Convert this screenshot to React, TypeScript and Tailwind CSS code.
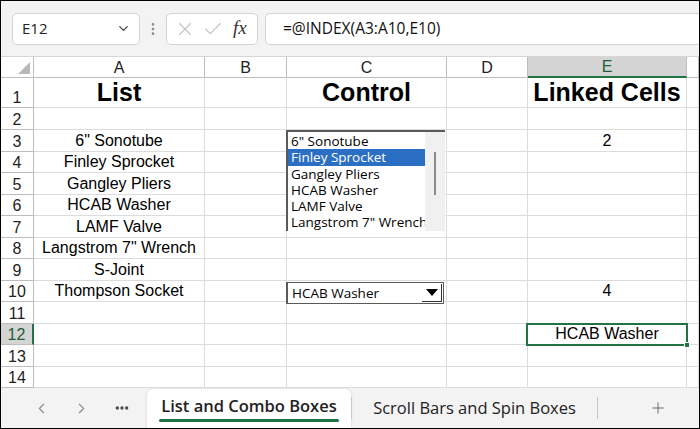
import { Check, ChevronDown, ChevronLeft, ChevronRight, EllipsisVertical, MoreHorizontal, Plus, X } from 'lucide-react'

type Row = { n: number; h: string; a?: string; c?: string; e?: string; bold?: boolean }

const rows: Row[] = [
  { n: 1, h: 'h-[30px]', a: 'List', c: 'Control', e: 'Linked Cells', bold: true },
  { n: 2, h: 'h-[22px]' },
  { n: 3, h: 'h-[22px]', a: '6" Sonotube', e: '2' },
  { n: 4, h: 'h-[21px]', a: 'Finley Sprocket' },
  { n: 5, h: 'h-[22px]', a: 'Gangley Pliers' },
  { n: 6, h: 'h-[21px]', a: 'HCAB Washer' },
  { n: 7, h: 'h-[22px]', a: 'LAMF Valve' },
  { n: 8, h: 'h-[21px]', a: 'Langstrom 7" Wrench' },
  { n: 9, h: 'h-[22px]', a: 'S-Joint' },
  { n: 10, h: 'h-[21px]', a: 'Thompson Socket', e: '4' },
  { n: 11, h: 'h-[22px]' },
  { n: 12, h: 'h-[21px]', e: 'HCAB Washer' },
  { n: 13, h: 'h-[22px]' },
  { n: 14, h: 'h-[21px]' }
]

const listItems = ['6" Sonotube', 'Finley Sprocket', 'Gangley Pliers', 'HCAB Washer', 'LAMF Valve', 'Langstrom 7" Wrench']

const cols = ['A', 'B', 'C', 'D', 'E', '']

const FormulaBar = () => (
  <div className="flex h-[56px] items-center border-b border-[#d6d6d6] bg-[#f3f3f3] pl-[11px] font-['Open_Sans',sans-serif]">
    <div className="flex h-[32px] w-[128px] items-center justify-between rounded-[5px] border border-[#d4d4d4] bg-white pl-[9px] pr-[8px] text-[15px] text-[#222]">
      <span>E12</span>
      <ChevronDown size={15} strokeWidth={2} className="text-[#444]" />
    </div>
    <EllipsisVertical size={16} className="ml-[5px] text-[#8a8a8a]" />
    <div className="ml-[5px] flex h-[32px] w-[92px] items-center rounded-[5px] border border-[#d4d4d4] bg-white pl-[7px] text-[#c2c2c2]">
      <X size={22} strokeWidth={1.2} />
      <Check size={22} strokeWidth={1.2} className="ml-[6px]" />
      <span className="ml-[9px] font-['Liberation_Serif',serif] text-[19px] italic text-[#333]">fx</span>
    </div>
    <div className="ml-[7px] flex h-[32px] flex-1 items-center rounded-l-[5px] border border-r-0 border-[#d4d4d4] bg-white pl-[17px] text-[15.5px] text-[#111]">
      =@INDEX(A3:A10,E10)
    </div>
  </div>
)

const Grid = () => (
  <div className="relative grid grid-cols-[33px_171px_82px_160px_81px_159px_1fr] font-['Liberation_Sans',Arial,sans-serif] text-[16px] text-black">
    <div className="relative h-[21px] border-b border-r border-[#bdbdbd] bg-white">
      <div className="absolute bottom-[3px] right-[3px] h-0 w-0 border-b-[12px] border-l-[12px] border-b-[#b8b8b8] border-l-transparent" />
    </div>
    {cols.map((c, i) =>
      c === 'E' ? (
        <div key={i} className="flex h-[21px] items-end justify-center border-b-2 border-r border-b-[#217346] border-r-[#bdbdbd] bg-[#d4d4d4] leading-[18px] text-[#1d5e38]">
          {c}
        </div>
      ) : (
        <div key={i} className="flex h-[21px] items-end justify-center border-b border-r border-[#bdbdbd] bg-white leading-[19px] text-[#222]">
          {c}
        </div>
      )
    )}
    {rows.map(r => (
      <div key={r.n} className="contents">
        <div
          className={`flex ${r.h} items-end justify-center border-b pb-[1px] leading-[17px] ${
            r.n === 12
              ? 'border-r-2 border-b-[#bdbdbd] border-r-[#217346] bg-[#d4d4d4] text-[#1d5e38]'
              : 'border-r border-[#bdbdbd] bg-white text-[#222]'
          }`}
        >
          {r.n}
        </div>
        {[r.a, undefined, r.c, undefined, r.e, undefined].map((v, i) => (
          <div
            key={i}
            className={`flex ${r.h} items-end justify-center overflow-visible whitespace-nowrap border-b border-r border-[#dcdcdc] pb-[1px] ${
              r.bold ? 'text-[25px] font-bold leading-[28px]' : 'leading-[18px]'
            }`}
          >
            {v}
          </div>
        ))}
      </div>
    ))}

    {/* list box */}
    <div className="absolute left-[285px] top-[73px] flex h-[101px] w-[159px] border-l-2 border-t-2 border-[#5a5a5a] bg-white font-['Open_Sans',sans-serif] text-[13.5px]">
      <div className="min-w-0 flex-1 overflow-hidden pt-[1px]">
        {listItems.map((t, i) => (
          <div
            key={t}
            className={`h-[16.3px] overflow-hidden whitespace-nowrap pl-[3px] leading-[16px] ${i === 1 ? 'bg-[#2b6fc4] text-white' : 'text-black'}`}
          >
            {t}
          </div>
        ))}
      </div>
      <div className="flex w-[20px] shrink-0 justify-center bg-[#f0f0f0] pt-[20px]">
        <div className="h-[43px] w-[2px] bg-[#8a8a8a]" />
      </div>
    </div>

    {/* combo box */}
    <div className="absolute left-[285px] top-[225px] flex h-[22px] w-[158px] items-center border border-l-2 border-[#5a5a5a] bg-white font-['Open_Sans',sans-serif] text-[13.5px]">
      <span className="flex-1 pl-[4px] text-black">HCAB Washer</span>
      <div className="mr-[1px] flex h-[18px] w-[20px] items-center justify-center border-b border-r border-[#333] bg-white">
        <div className="h-0 w-0 border-l-[6px] border-r-[6px] border-t-[7px] border-l-transparent border-r-transparent border-t-black" />
      </div>
    </div>

    {/* active cell */}
    <div className="absolute left-[525px] top-[266px] h-[23px] w-[162px] border-2 border-[#217346]">
      <div className="absolute -bottom-[4px] -right-[4px] h-[6px] w-[6px] border border-white bg-[#217346]" />
    </div>
  </div>
)

const Tabs = () => (
  <div className="flex h-[40px] items-stretch bg-[#f3f3f3] font-['Open_Sans',sans-serif] text-[#222]">
    <div className="flex w-[146px] items-center text-[#8a8a8a]">
      <ChevronLeft size={17} strokeWidth={1.5} className="ml-[32px]" />
      <ChevronRight size={17} strokeWidth={1.5} className="ml-[23px]" />
      <MoreHorizontal size={16} strokeWidth={3} className="ml-[24px] text-[#444]" />
    </div>
    <div className="mt-[1px] flex w-[204px] flex-col items-center justify-center rounded-t-[6px] bg-white shadow-[0_0_3px_rgba(0,0,0,0.15)]">
      <span className="text-[16.5px] font-semibold leading-[22px]">List and Combo Boxes</span>
      <div className="mt-[2px] h-[3px] w-[180px] rounded-full bg-[#217346]" />
    </div>
    <div className="my-[9px] w-px bg-[#c8c8c8]" />
    <div className="flex w-[245px] items-center justify-center text-[16.5px]">Scroll Bars and Spin Boxes</div>
    <div className="my-[9px] w-px bg-[#c8c8c8]" />
    <div className="flex flex-1 items-center pl-[51px] text-[#666]">
      <Plus size={18} strokeWidth={1.3} />
    </div>
  </div>
)

export default function App() {
  return (
    <div className="h-[429px] w-[700px] overflow-hidden border border-black bg-white">
      <FormulaBar />
      <Grid />
      <Tabs />
    </div>
  )
}
